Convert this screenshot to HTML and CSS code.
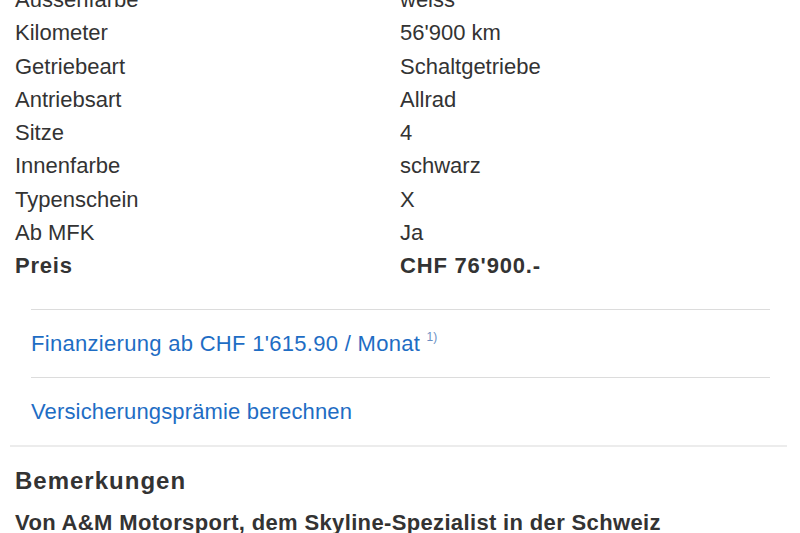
FILE: index.html
```
<!DOCTYPE html>
<html lang="de">
<head>
    <meta charset="UTF-8">
    <meta name="viewport" content="width=device-width, initial-scale=1.0">
    <title>Fahrzeugdetails</title>
    <link rel="stylesheet" href="styles.css">
</head>
<body>

    <div class="details">
        <table class="specs">
            <tr><td>Aussenfarbe</td><td>weiss</td></tr>
            <tr><td>Kilometer</td><td>56'900 km</td></tr>
            <tr><td>Getriebeart</td><td>Schaltgetriebe</td></tr>
            <tr><td>Antriebsart</td><td>Allrad</td></tr>
            <tr><td>Sitze</td><td>4</td></tr>
            <tr><td>Innenfarbe</td><td>schwarz</td></tr>
            <tr><td>Typenschein</td><td>X</td></tr>
            <tr><td>Ab MFK</td><td>Ja</td></tr>
            <tr class="price"><td>Preis</td><td>CHF 76'900.-</td></tr>
        </table>

        <ul class="links">
            <li><a href="#">Finanzierung ab CHF 1'615.90 / Monat</a> <sup>1)</sup></li>
            <li><a href="#">Versicherungsprämie berechnen</a></li>
        </ul>
    </div>

    <div class="remarks">
        <h2>Bemerkungen</h2>
        <p class="lead">Von A&amp;M Motorsport, dem Skyline-Spezialist in der Schweiz</p>
    </div>

</body>
</html>
```

FILE: styles.css
```
body {
    margin: 0;
    font-family: 'Liberation Sans', Arial, Helvetica, sans-serif;
    color: #333;
    background: #fff;
    overflow: hidden;
}

.details {
    margin: -17px 13px 0 10px;
    border-bottom: 2px solid #ececec;
}

.specs {
    border-collapse: collapse;
    margin-left: 5px;
    font-size: 22px;
}

.specs td {
    padding: 0;
    height: 33.3px;
    line-height: 33.3px;
    white-space: nowrap;
}

.specs td:first-child {
    width: 385px;
}

.specs .price td {
    font-weight: bold;
    letter-spacing: 0.8px;
}

.links {
    list-style: none;
    margin: 26px 17px 0 21px;
    padding: 0;
}

.links li {
    border-top: 1px solid #dcdcdc;
    height: 67px;
    line-height: 67px;
    font-size: 22px;
    letter-spacing: 0.15px;
}

.links li:first-child a {
    letter-spacing: 0.3px;
}

.links a {
    color: #1e6dc4;
    text-decoration: none;
}

.links sup {
    font-size: 12px;
    color: #6b8fc4;
    vertical-align: 10px;
    line-height: 0;
}

.remarks {
    padding: 0 15px;
}

.remarks h2 {
    margin: 18px 0 0;
    font-size: 24px;
    line-height: 32px;
    font-weight: bold;
    letter-spacing: 1px;
    color: #333;
}

.remarks .lead {
    margin: 11px 0 0;
    font-size: 22px;
    line-height: 30px;
    font-weight: bold;
    letter-spacing: 0.35px;
    color: #333;
}
```
